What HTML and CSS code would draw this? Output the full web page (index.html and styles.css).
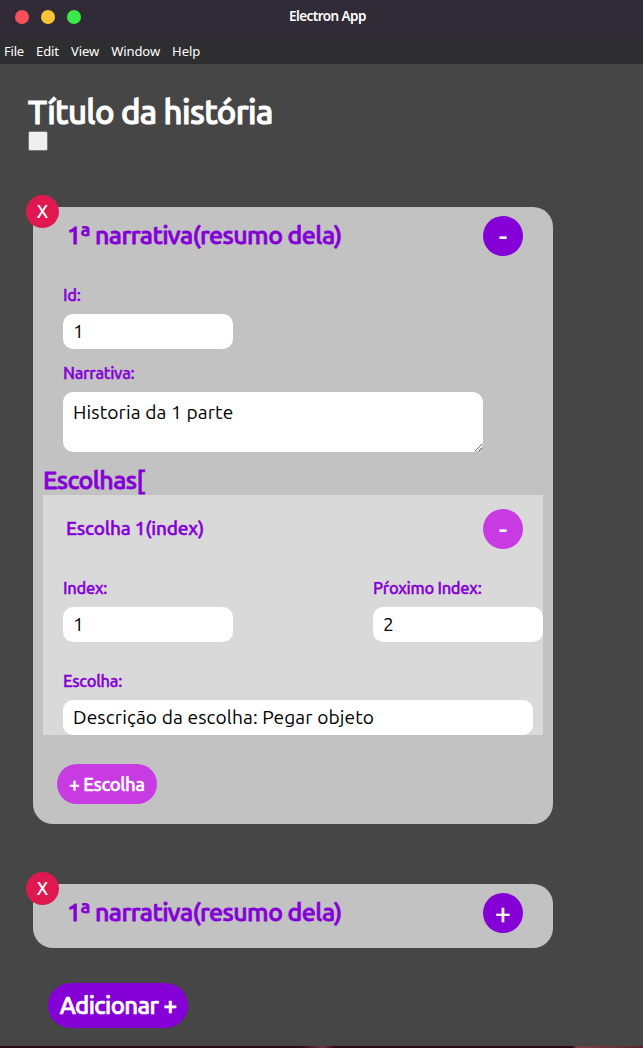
FILE: index.html
```html
<!DOCTYPE html>
<html lang="pt">
<head>
<meta charset="utf-8">
<title>Electron App</title>
<link rel="stylesheet" href="styles.css">
</head>
<body>
<header class="titlebar">
  <div class="lights"><span class="light close"></span><span class="light minimize"></span><span class="light maximize"></span></div>
  <span class="app-name">Electron App</span>
</header>
<nav class="menubar"><span class="first">File</span><span>Edit</span><span>View</span><span>Window</span><span>Help</span></nav>
<main class="page">
  <h1 class="story-title">Título da história</h1>
  <div class="color-box"></div>

  <section class="card card-open">
    <button class="remove">X</button>
    <div class="card-head">
      <h2 class="card-title">1ª narrativa(resumo dela)</h2>
      <button class="round">-</button>
    </div>
    <div class="fields">
      <label class="label">Id:</label>
      <input class="input short" value="1">
      <label class="label l-narrativa">Narrativa:</label>
      <textarea class="input area" spellcheck="false">Historia da 1 parte</textarea>
    </div>
    <h2 class="choices-title">Escolhas[</h2>
    <div class="choice">
      <div class="choice-head">
        <h3 class="choice-title">Escolha 1(index)</h3>
        <button class="round pink">-</button>
      </div>
      <div class="choice-row">
        <div class="field">
          <label class="label">Index:</label>
          <input class="input short" value="1">
        </div>
        <div class="field">
          <label class="label">Pŕoximo Index:</label>
          <input class="input short" value="2">
        </div>
      </div>
      <div class="choice-text">
        <label class="label">Escolha:</label>
        <input class="input long" value="Descrição da escolha: Pegar objeto">
      </div>
    </div>
    <button class="pill add-choice">+ Escolha</button>
  </section>

  <section class="card card-closed">
    <button class="remove">X</button>
    <div class="card-head">
      <h2 class="card-title">1ª narrativa(resumo dela)</h2>
      <button class="round expand">+</button>
    </div>
  </section>

  <button class="pill add-story">Adicionar +</button>
</main>
<footer class="desktop-edge"></footer>
</body>
</html>
```
FILE: styles.css
```css
* { box-sizing: border-box; }
body {
  margin: 0;
  width: 643px;
  height: 1048px;
  display: flex;
  flex-direction: column;
  overflow: hidden;
  background: #464646;
  font-family: Ubuntu, "Noto Sans", sans-serif;
}
h1, h2, h3 { margin: 0; font-weight: 500; white-space: nowrap; }
button { border: 0; padding: 0; color: #fff; font-family: inherit; font-weight: 500; white-space: nowrap; }

.titlebar {
  height: 39px;
  flex: none;
  background: #302b36;
  display: grid;
  grid-template-columns: 289px 1fr;
}
.lights { display: flex; gap: 12px; padding: 10px 0 0 15px; }
.light { width: 14px; height: 14px; border-radius: 50%; }
.close { background: #f85058; }
.minimize { background: #fcc436; }
.maximize { background: #3aea49; }
.app-name {
  color: #fff;
  font: 600 13.5px/32px "Noto Sans", sans-serif;
  letter-spacing: -0.55px;
}
.menubar {
  height: 25px;
  flex: none;
  padding-left: 4px;
  display: flex;
  gap: 12px;
  background: #2e2e30;
  color: #fff;
  font: 13px/25px "Noto Sans", sans-serif;
  letter-spacing: -0.07px;
}
.first { letter-spacing: -0.2px; }

.page {
  flex: 1;
  padding: 26px 0 0 28px;
  display: flex;
  flex-direction: column;
  align-items: flex-start;
}
.story-title {
  height: 41px;
  color: #fff;
  font-size: 33px;
  line-height: 43px;
  letter-spacing: -0.63px;
  -webkit-text-stroke: 1.1px;
}
.color-box {
  width: 20px;
  height: 20px;
  background: #efefef;
  border: 1px solid #777;
  border-radius: 2px;
}
.card {
  position: relative;
  width: 520px;
  margin-left: 5px;
  border-radius: 20px;
  background: #c2c2c2;
}
.card-open { height: 617px; margin-top: 56px; }
.card-closed { height: 64px; margin-top: 60px; }
.remove {
  position: absolute;
  left: -7px;
  top: -12px;
  width: 33px;
  height: 33px;
  border-radius: 50%;
  background: #df184f;
  font-size: 18px;
  line-height: 33px;
}
.card-head {
  display: flex;
  justify-content: space-between;
  padding: 9px 30px 0 34px;
}
.card-title, .choices-title {
  color: #8400d6;
  font-size: 25px;
  line-height: 38px;
  letter-spacing: -0.57px;
  -webkit-text-stroke: 0.8px;
}
.round {
  width: 40px;
  height: 40px;
  border-radius: 50%;
  background: #8400d6;
  font-size: 28px;
  line-height: 40px;
}
.expand { line-height: 38px; font-weight: 400; -webkit-text-stroke: 0.5px; }
.pink { background: #c83ae2; }
.fields {
  display: flex;
  flex-direction: column;
  align-items: flex-start;
  padding: 28px 0 0 30px;
}
.label {
  display: block;
  height: 30px;
  color: #8400d6;
  font-size: 16.5px;
  font-weight: 500;
  line-height: 22px;
  letter-spacing: -0.3px;
  white-space: nowrap;
  -webkit-text-stroke: 0.4px;
}
.input {
  display: block;
  height: 35px;
  margin: 0;
  padding: 0 10px 1px;
  border: 0;
  outline: 0;
  border-radius: 10px;
  background: #fff;
  color: #000;
  font: 19.2px/24px Ubuntu, "Noto Sans", sans-serif;
  letter-spacing: 0.1px;
}
.short { width: 170px; }
.long { width: 470px; }
.l-narrativa { margin-top: 13px; }
.area { width: 420px; height: 60px; padding-top: 8px; }
.choices-title { height: 43px; padding-left: 10px; line-height: 56px; }
.choice {
  width: 500px;
  height: 240px;
  margin-left: 10px;
  background: #d9d9d9;
}
.choice-head {
  display: flex;
  justify-content: space-between;
  padding: 14px 20px 0 23px;
}
.choice-title {
  color: #8400d6;
  font-size: 19px;
  line-height: 38px;
  letter-spacing: -0.2px;
  -webkit-text-stroke: 0.5px;
}
.choice-row {
  display: flex;
  justify-content: space-between;
  padding: 28px 0 0 20px;
}
.choice-text { padding: 28px 0 0 20px; }
.pill { display: block; }
.add-choice {
  width: 100px;
  height: 40px;
  margin: 29px 0 0 24px;
  border-radius: 20px;
  background: #c83ae2;
  font-size: 18.5px;
  letter-spacing: -0.4px;
  -webkit-text-stroke: 0.5px;
}
.add-story {
  width: 140px;
  height: 45px;
  margin: 35px 0 0 20px;
  border-radius: 22.5px;
  background: #8400d6;
  font-size: 24px;
  letter-spacing: -0.6px;
  -webkit-text-stroke: 0.7px;
}
.desktop-edge {
  flex: none;
  height: 2px;
  background: linear-gradient(90deg, #2b0b13 0 300px, #713445 323px, #2b0b13 335px 572px, #81404a 577px, #57262d 643px);
}
```
